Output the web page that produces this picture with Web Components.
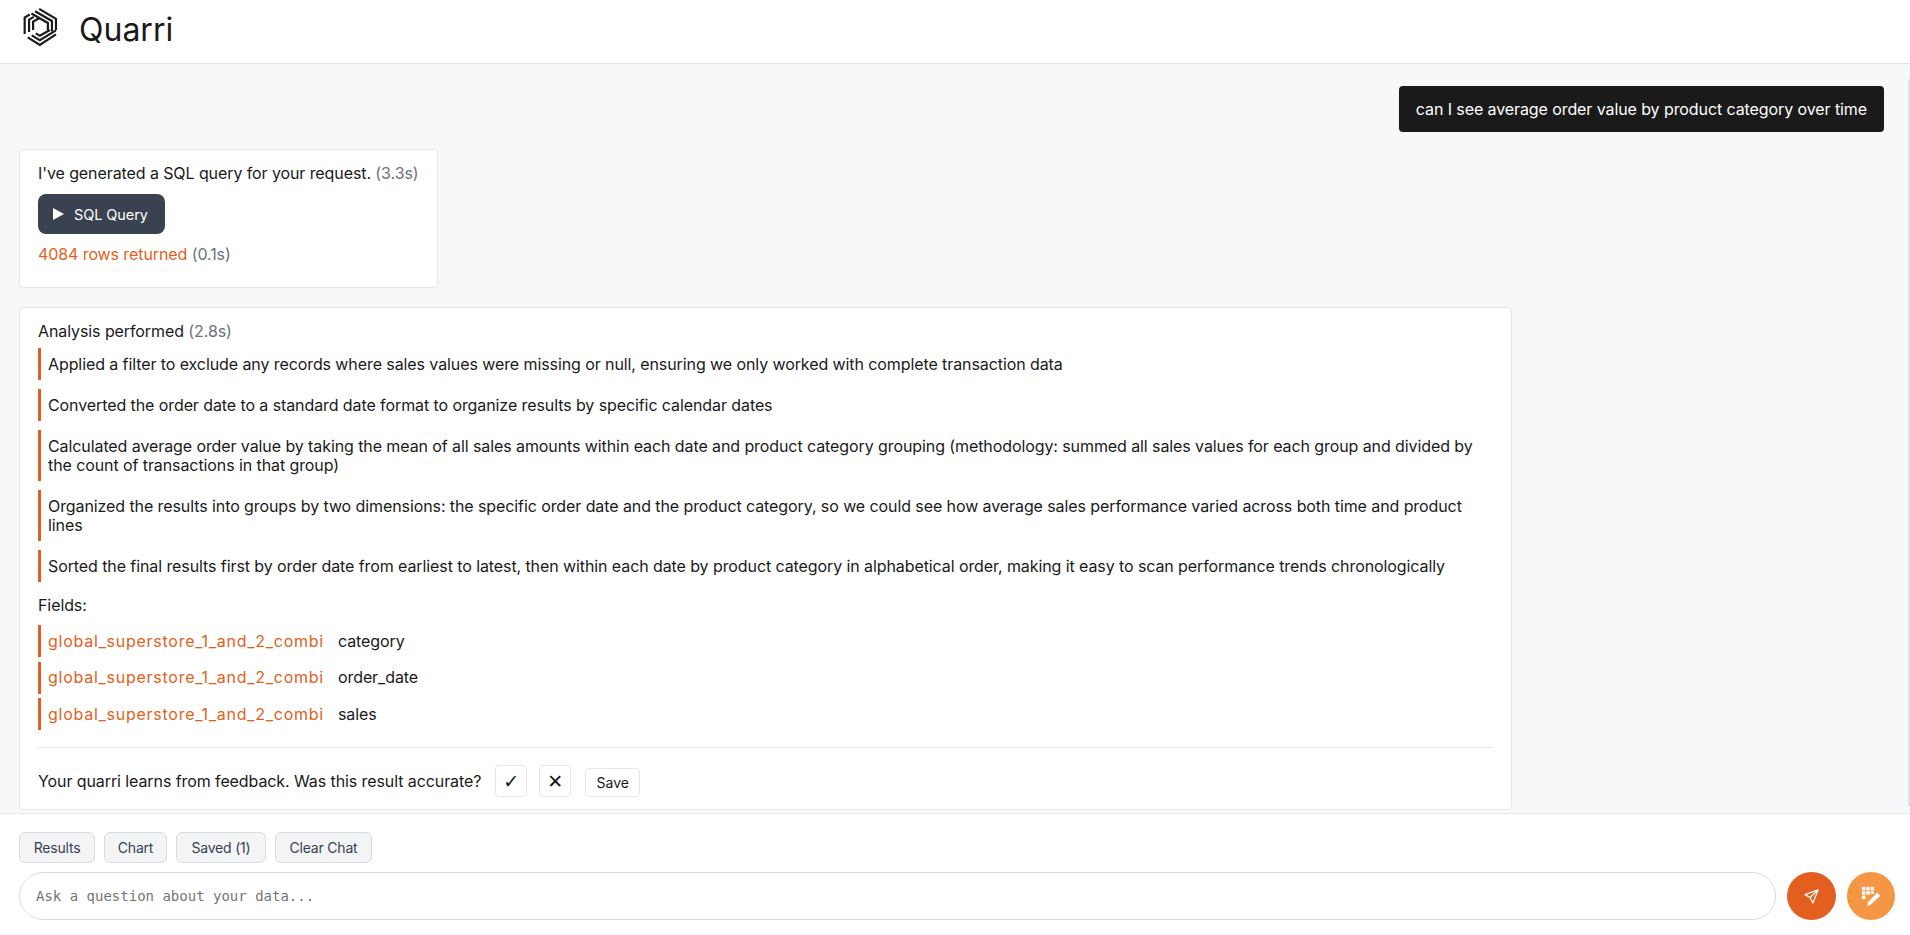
<!DOCTYPE html>
<html lang="en">
<head>
<meta charset="utf-8">
<title>Quarri</title>
<style>
  html, body { margin: 0; height: 100%; }
  body {
    font-family: Inter, 'Liberation Sans', Arial, sans-serif;
    letter-spacing: -0.09px;
    color: #1a1a1a;
    background: #f7f8fa;
    overflow: hidden;
  }
  quarri-app { height: 935px; }
</style>
</head>
<body>
<quarri-app>
  <quarri-header slot="header" title="Quarri"></quarri-header>
  <user-bubble>can I see average order value by product category over time</user-bubble>
  <chat-card width="fit">
    <div style="line-height:19px">I've generated a SQL query for your request. <span style="color:#6b7280">(3.3s)</span></div>
    <sql-toggle>SQL Query</sql-toggle>
    <div style="line-height:19px;margin-bottom:14px"><span style="color:#e35f20">4084 rows returned</span> <span style="color:#6b7280">(0.1s)</span></div>
  </chat-card>
  <chat-card>
    <div style="line-height:19px;margin-bottom:7px">Analysis performed <span style="color:#6b7280">(2.8s)</span></div>
    <step-item>Applied a filter to exclude any records where sales values were missing or null, ensuring we only worked with complete transaction data</step-item>
    <step-item>Converted the order date to a standard date format to organize results by specific calendar dates</step-item>
    <step-item>Calculated average order value by taking the mean of all sales amounts within each date and product category grouping (methodology: summed all sales values for each group and divided by the count of transactions in that group)</step-item>
    <step-item>Organized the results into groups by two dimensions: the specific order date and the product category, so we could see how average sales performance varied across both time and product lines</step-item>
    <step-item>Sorted the final results first by order date from earliest to latest, then within each date by product category in alphabetical order, making it easy to scan performance trends chronologically</step-item>
    <div style="line-height:19px;margin:14px 0 10px">Fields:</div>
    <field-item table="global_superstore_1_and_2_combi">category</field-item>
    <field-item table="global_superstore_1_and_2_combi">order_date</field-item>
    <field-item table="global_superstore_1_and_2_combi">sales</field-item>
    <feedback-row>Your quarri learns from feedback. Was this result accurate?</feedback-row>
  </chat-card>
  <chat-composer slot="footer"></chat-composer>
</quarri-app>

<script>
// App shell: header on top, scrolling messages, composer at the bottom
class QuarriApp extends HTMLElement {
  constructor() {
    super();
    this.attachShadow({ mode: 'open' });
    this.shadowRoot.innerHTML = `
      <style>
        :host { display: flex; flex-direction: column; }
        .messages {
          position: relative;
          flex: 1;
          min-height: 0;
          overflow: hidden;
          display: flex;
          flex-direction: column;
          gap: 19px;
          padding: 22px 26px 0 19px;
        }
        /* thin scrollbar thumb on the right edge */
        .messages::after {
          content: '';
          position: absolute;
          top: 15px;
          bottom: 7px;
          right: 0;
          width: 2px;
          background: #dfe2e6;
        }
      </style>
      <slot name="header"></slot>
      <div class="messages"><slot></slot></div>
      <slot name="footer"></slot>
    `;
  }
}

class QuarriHeader extends HTMLElement {
  constructor() {
    super();
    this.attachShadow({ mode: 'open' });
    this.shadowRoot.innerHTML = `
      <style>
        :host {
          display: flex;
          align-items: center;
          gap: 21px;
          height: 63px;
          padding-left: 23px;
          background: #fff;
          border-bottom: 1px solid #e5e7eb;
          flex: none;
        }
        svg { width: 35px; height: 40px; display: block; margin-top: -9px; }
        h1 { margin: -5px 0 0; font-size: 32px; font-weight: 400; letter-spacing: 0; color: #1a1a1a; }
      </style>
      <svg viewBox="70 22 104 118" fill="none" stroke="#1a1a1a" stroke-width="6.500">
        <path d="M118 27 L168 57 V90"/>
        <path d="M106 34 L156 63 V94"/>
        <path d="M95 41 L144 69 V90"/>
        <path d="M90 44 L75 53 V102"/>
        <path d="M102 51 L88 59 V96"/>
        <path d="M118 55 L100 65 V90"/>
        <path d="M168 103 L120 134 L84 112"/>
        <path d="M168 91 L120 120 L96 106"/>
        <path d="M150 90 L120 107 L108 100"/>
      </svg>
      <h1>${this.getAttribute('title') || ''}</h1>
    `;
  }
}

class UserBubble extends HTMLElement {
  constructor() {
    super();
    this.attachShadow({ mode: 'open' });
    this.shadowRoot.innerHTML = `
      <style>
        :host {
          display: block;
          align-self: flex-end;
          background: #1a1a1a;
          color: #fff;
          border-radius: 4px;
          padding: 14px 17px;
          margin-bottom: -2px;
          font-size: 16px;
          line-height: 18px;
        }
      </style>
      <slot></slot>
    `;
  }
}

class ChatCard extends HTMLElement {
  constructor() {
    super();
    this.attachShadow({ mode: 'open' });
    this.shadowRoot.innerHTML = `
      <style>
        :host {
          display: block;
          box-sizing: border-box;
          width: 1493px;
          flex: none;
          background: #fff;
          border: 1px solid #e5e7eb;
          border-radius: 4px;
          padding: 14px 18px 12px;
          font-size: 16px;
        }
        :host([width="fit"]) { width: 419px; padding: 14px 10px 9px 18px; }
      </style>
      <slot></slot>
    `;
  }
}

class SqlToggle extends HTMLElement {
  constructor() {
    super();
    this.attachShadow({ mode: 'open' });
    this.shadowRoot.innerHTML = `
      <style>
        :host {
          display: flex;
          align-items: center;
          gap: 10px;
          width: 127px;
          box-sizing: border-box;
          height: 40px;
          margin: 11px 0;
          padding: 0 15px;
          background: #3a4150;
          color: #fff;
          border-radius: 8px;
          font-size: 14.500px;
        }
        i { width: 0; height: 0; border-left: 11px solid #fff; border-top: 6px solid transparent; border-bottom: 6px solid transparent; }
      </style>
      <i></i><span><slot></slot></span>
    `;
  }
}

class StepItem extends HTMLElement {
  constructor() {
    super();
    this.attachShadow({ mode: 'open' });
    this.shadowRoot.innerHTML = `
      <style>
        :host {
          display: block;
          border-left: 3px solid #e35f20;
          padding: 6.500px 0 6.500px 7px;
          margin-bottom: 9px;
          line-height: 19px;
          font-size: 16px;
        }
      </style>
      <slot></slot>
    `;
  }
}

class FieldItem extends HTMLElement {
  constructor() {
    super();
    this.attachShadow({ mode: 'open' });
    this.shadowRoot.innerHTML = `
      <style>
        :host {
          display: flex;
          gap: 13px;
          border-left: 3px solid #e35f20;
          padding: 6.500px 0 6.500px 7px;
          margin-bottom: 4.500px;
          line-height: 19px;
          font-size: 16px;
        }
        b { font-weight: 400; color: #e35f20; width: 277px; letter-spacing: 0.74px; white-space: nowrap; }
      </style>
      <b>${this.getAttribute('table') || ''}</b><span><slot></slot></span>
    `;
  }
}

class FeedbackRow extends HTMLElement {
  constructor() {
    super();
    this.attachShadow({ mode: 'open' });
    this.shadowRoot.innerHTML = `
      <style>
        :host {
          display: flex;
          align-items: center;
          margin-top: 17px;
          padding-top: 17px;
          border-top: 1px solid #e5e7eb;
          font-size: 16px;
          height: 32px;
        }
        button {
          font: inherit;
          color: #1a1a1a;
          background: #fff;
          border: 1px solid #e5e7eb;
          border-radius: 4px;
          height: 32px;
          padding: 0;
          box-sizing: border-box;
        }
        .ok, .no { width: 32px; margin-left: 12px; font: 700 19px 'DejaVu Sans', sans-serif; }
        .ok { margin-left: 14px; }
        .save { width: 55px; height: 29px; margin: 3px 0 0 14px; font-size: 14px; }
      </style>
      <span><slot></slot></span>
      <button class="ok">✓</button><button class="no">✕</button><button class="save">Save</button>
    `;
  }
}

class ChatComposer extends HTMLElement {
  constructor() {
    super();
    this.attachShadow({ mode: 'open' });
    this.shadowRoot.innerHTML = `
      <style>
        :host {
          display: block;
          flex: none;
          background: #fff;
          border-top: 1px solid #e5e7eb;
          padding: 18px 15px 15px 19px;
        }
        .tabs { display: flex; gap: 9px; margin-bottom: 9px; }
        .tabs button {
          font: 14px Inter, 'Liberation Sans', Arial, sans-serif;
          letter-spacing: -0.2px;
          color: #374151;
          background: #f3f4f6;
          border: 1px solid #d9dce1;
          border-radius: 6px;
          height: 31px;
          padding: 0;
        }
        .row { display: flex; align-items: center; gap: 11px; }
        .ask {
          flex: 1;
          box-sizing: border-box;
          height: 48px;
          border: 1px solid #d9dce1;
          border-radius: 24px;
          padding: 0 16px;
          font: 14px 'DejaVu Sans Mono', monospace;
          letter-spacing: 0;
          color: #757575;
          display: flex;
          align-items: center;
        }
        .round {
          width: 48px; height: 48px; border-radius: 50%;
          display: flex; align-items: center; justify-content: center;
          flex: none;
        }
        .send { background: #e35f20; width: 49px; }
        .sketch { background: #f59644; }
      </style>
      <div class="tabs">
        <button style="width:76px">Results</button><button style="width:63px">Chart</button><button style="width:90px">Saved (1)</button><button style="width:97px">Clear Chat</button>
      </div>
      <div class="row">
        <div class="ask">Ask a question about your data...</div>
        <div class="round send">
          <svg width="15" height="15" viewBox="0 0 16 16" fill="none" stroke="#fff" stroke-width="1.300" stroke-linejoin="round">
            <path d="M15 1 L1 6 L6.500 9 L9.500 15 Z"/><path d="M15 1 L6.500 9"/>
          </svg>
        </div>
        <div class="round sketch">
          <svg width="21" height="21" viewBox="0 0 24 24" fill="#fff">
            <rect x="1" y="1" width="4" height="4"/><rect x="6" y="1" width="4" height="4"/><rect x="11" y="1" width="4" height="4"/>
            <rect x="1" y="6" width="4" height="4"/><rect x="6" y="6" width="4" height="4"/><rect x="11" y="6" width="4" height="3"/>
            <rect x="1" y="11" width="4" height="4"/>
            <path d="M18.500 7.500 L22 11 L11 21.500 L7 22.500 L8 18.500 Z"/>
          </svg>
        </div>
      </div>
    `;
  }
}

customElements.define('quarri-app', QuarriApp);
customElements.define('quarri-header', QuarriHeader);
customElements.define('user-bubble', UserBubble);
customElements.define('chat-card', ChatCard);
customElements.define('sql-toggle', SqlToggle);
customElements.define('step-item', StepItem);
customElements.define('field-item', FieldItem);
customElements.define('feedback-row', FeedbackRow);
customElements.define('chat-composer', ChatComposer);
</script>
</body>
</html>
